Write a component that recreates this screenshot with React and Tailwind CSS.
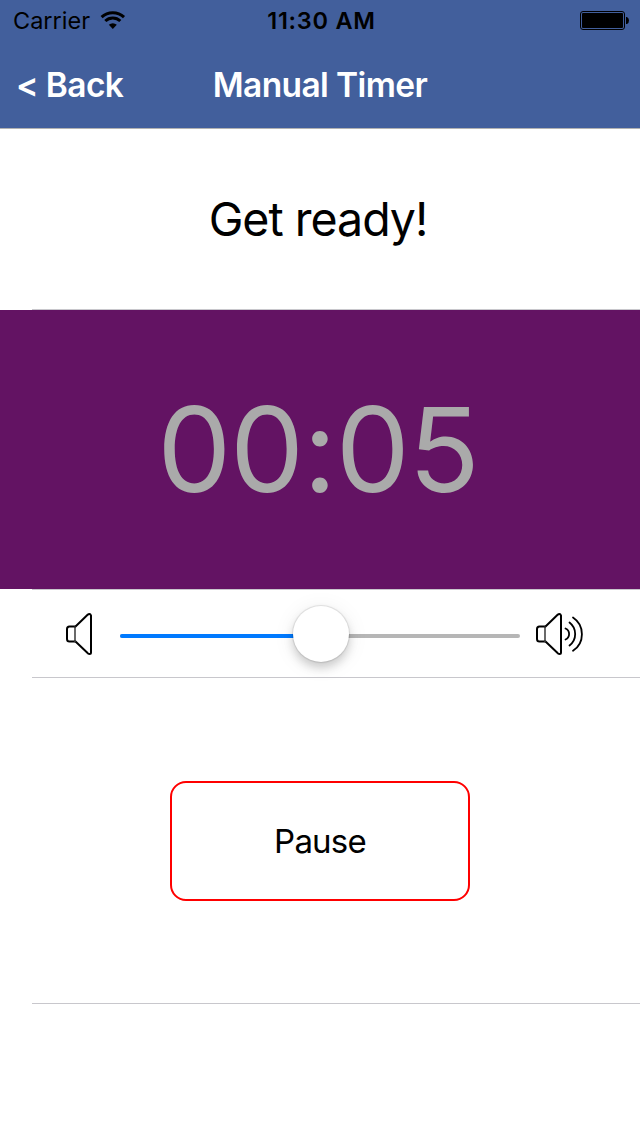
function Wifi() {
  return (
    <svg width="26" height="20" viewBox="0 0 26 20" fill="none" stroke="#000" strokeWidth="3">
      <path d="M1.6 7.2a16.2 16.2 0 0 1 22.4 0" />
      <path d="M5.3 11a10.9 10.9 0 0 1 15 0" />
      <path d="M12.8 18.9l-4-4.1a5.8 5.8 0 0 1 8 0z" fill="#000" stroke="none" />
    </svg>
  );
}

function Battery() {
  return (
    <svg width="50" height="20" viewBox="0 0 50 20">
      <rect x="0.5" y="1.5" width="44" height="18" rx="2.5" fill="none" stroke="#000" />
      <rect x="2" y="3" width="41" height="15" rx="1" fill="#000" />
      <path d="M46 7h1q2 1 2 3.5t-2 3.5h-1z" fill="#000" />
    </svg>
  );
}

function Speaker({ waves }) {
  return (
    <svg width="50" height="44" viewBox="0 0 50 44" fill="none" stroke="#000" strokeWidth="2" strokeLinecap="round">
      <path d="M9 14L21.6 1.8Q22.500 1 23.500 1T25 2.5V39.5Q25 41 23.500 41T21.600 40L9 28" strokeLinejoin="round" />
      <path d="M9 13.5H3.5Q1 13.500 1 16V26Q1 28.500 3.5 28.500H9" />
      <path d="M9 14V28.500" stroke="#444" strokeWidth="1.6" />
      {waves && (
        <g strokeWidth="1.8">
          <path d="M29.500 15.500a6 6 0 0 1 0 11" />
          <path d="M33.500 9.500a14.500 14.500 0 0 1 0 23" />
          <path d="M37 4.500a20 20 0 0 1 0 33.300" />
        </g>
      )}
    </svg>
  );
}

export default function App() {
  return (
    <div className="flex h-[1136px] w-[640px] flex-col overflow-hidden bg-white font-['Inter',sans-serif] text-black">
      <header className="h-[129px] shrink-0 border-b border-[#b2b2b2] bg-[#425f9c]">
        <div className="grid h-10 grid-cols-[1fr_auto_1fr] items-center pr-[10px] pl-[13px] text-[23.5px] leading-10">
          <div className="flex items-center gap-[10px]">
            <span className="pt-0.5 leading-[38px]">Carrier</span>
            <Wifi />
          </div>
          <span className="pt-0.5 leading-[38px] font-semibold tracking-[0.75px]">11:30 AM</span>
          <div className="flex justify-end">
            <Battery />
          </div>
        </div>
        <div className="grid h-[88px] grid-cols-[1fr_auto_1fr] items-center px-4 pt-0.5 text-[33.5px] font-semibold tracking-[-0.6px] text-white">
          <button className="text-left">&lt; Back</button>
          <h1>Manual Timer</h1>
          <span />
        </div>
      </header>
      <section className="flex h-[180px] shrink-0 items-center justify-center pt-0.5 pr-1 text-[46.5px] tracking-[-1px]">
        Get ready!
      </section>
      <hr className="ml-8 border-[#c8c7cc]" />
      <section className="flex h-[279px] shrink-0 items-center justify-center bg-[#631363] pr-1 text-[117.5px] tracking-[-1.2px] text-[#aaaaaa]">
        00:05
      </section>
      <hr className="ml-8 border-[#c8c7cc]" />
      <section className="flex h-[87px] shrink-0 pl-[66px]">
        <div className="mt-[23px] w-[54px]">
          <Speaker />
        </div>
        <div className="relative mt-11 flex h-1 w-[400px] rounded-full bg-[#b6b6b6]">
          <div className="h-1 w-[200px] rounded-l-full bg-[#007aff]" />
          <div className="absolute -top-[28px] left-[173px] size-14 rounded-full bg-white shadow-[0_0_1px_1px_rgba(0,0,0,0.1),0_6px_10px_rgba(0,0,0,0.17),0_3px_22px_rgba(0,0,0,0.08)]" />
        </div>
        <div className="mt-[23px] ml-4">
          <Speaker waves />
        </div>
      </section>
      <hr className="ml-8 border-[#c8c7cc]" />
      <section className="flex h-[325px] shrink-0 items-center justify-center">
        <button className="h-[120px] w-[300px] rounded-2xl border-2 border-[#ff0000] pt-0.5 text-[33px] tracking-[-0.8px]">
          Pause
        </button>
      </section>
      <hr className="ml-8 border-[#c8c7cc]" />
    </div>
  );
}
